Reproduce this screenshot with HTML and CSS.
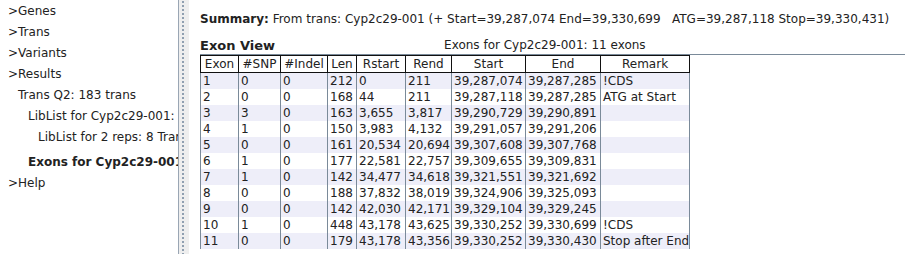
FILE: index.html
```html
<!DOCTYPE html>
<html lang="en">
<head>
    <meta charset="UTF-8">
    <title>Exon View</title>
    <link rel="stylesheet" href="styles.css">
</head>
<body>
    <div class="frame">
        <!-- Left navigation tree -->
        <div class="tree">
            <div class="node">&gt;Genes</div>
            <div class="node">&gt;Trans</div>
            <div class="node">&gt;Variants</div>
            <div class="node">&gt;Results</div>
            <div class="node lvl1">Trans Q2: 183 trans</div>
            <div class="node lvl2">LibList for Cyp2c29-001:</div>
            <div class="node lvl3">LibList for 2 reps: 8 Tran</div>
            <div class="node lvl2 current">Exons for Cyp2c29-001:</div>
            <div class="node">&gt;Help</div>
        </div>

        <div class="divider"></div>

        <!-- Result panel -->
        <div class="panel">
            <div class="summary"><b>Summary:</b> From trans: Cyp2c29-001 (+ Start=39,287,074 End=39,330,699 &nbsp; ATG=39,287,118 Stop=39,330,431)</div>

            <div class="view-head">
                <b>Exon View</b>
                <span class="view-title">Exons for Cyp2c29-001: 11 exons</span>
            </div>

            <div class="scroll">
                <table class="exons">
                    <thead>
                        <tr>
                            <th class="c-exon">Exon</th>
                            <th class="c-snp">#SNP</th>
                            <th class="c-indel">#Indel</th>
                            <th class="c-len">Len</th>
                            <th class="c-rstart">Rstart</th>
                            <th class="c-rend">Rend</th>
                            <th class="c-start">Start</th>
                            <th class="c-end">End</th>
                            <th class="c-remark">Remark</th>
                        </tr>
                    </thead>
                    <tbody>
                        <tr><td>1</td><td>0</td><td>0</td><td>212</td><td>0</td><td>211</td><td>39,287,074</td><td>39,287,285</td><td>!CDS</td></tr>
                        <tr><td>2</td><td>0</td><td>0</td><td>168</td><td>44</td><td>211</td><td>39,287,118</td><td>39,287,285</td><td>ATG at Start</td></tr>
                        <tr><td>3</td><td>3</td><td>0</td><td>163</td><td>3,655</td><td>3,817</td><td>39,290,729</td><td>39,290,891</td><td></td></tr>
                        <tr><td>4</td><td>1</td><td>0</td><td>150</td><td>3,983</td><td>4,132</td><td>39,291,057</td><td>39,291,206</td><td></td></tr>
                        <tr><td>5</td><td>0</td><td>0</td><td>161</td><td>20,534</td><td>20,694</td><td>39,307,608</td><td>39,307,768</td><td></td></tr>
                        <tr><td>6</td><td>1</td><td>0</td><td>177</td><td>22,581</td><td>22,757</td><td>39,309,655</td><td>39,309,831</td><td></td></tr>
                        <tr><td>7</td><td>1</td><td>0</td><td>142</td><td>34,477</td><td>34,618</td><td>39,321,551</td><td>39,321,692</td><td></td></tr>
                        <tr><td>8</td><td>0</td><td>0</td><td>188</td><td>37,832</td><td>38,019</td><td>39,324,906</td><td>39,325,093</td><td></td></tr>
                        <tr><td>9</td><td>0</td><td>0</td><td>142</td><td>42,030</td><td>42,171</td><td>39,329,104</td><td>39,329,245</td><td></td></tr>
                        <tr><td>10</td><td>1</td><td>0</td><td>448</td><td>43,178</td><td>43,625</td><td>39,330,252</td><td>39,330,699</td><td>!CDS</td></tr>
                        <tr><td>11</td><td>0</td><td>0</td><td>179</td><td>43,178</td><td>43,356</td><td>39,330,252</td><td>39,330,430</td><td>Stop after End</td></tr>
                    </tbody>
                </table>
            </div>
        </div>
    </div>
</body>
</html>
```
FILE: styles.css
```css
/* Swing-like result browser */
html, body { margin: 0; height: 100%; background: #fff; }
body { font-family: "DejaVu Sans", Verdana, sans-serif; font-size: 12px; color: #222; overflow: hidden; }

.frame { display: flex; height: 254px; overflow: hidden; }

.tree { width: 178px; flex: none; padding-top: 1px; overflow: hidden; white-space: nowrap; }
.node { height: 21px; line-height: 21px; padding-left: 8px; overflow: hidden; }
.node.lvl1 { padding-left: 18px; }
.node.lvl2 { padding-left: 28px; }
.node.lvl3 { padding-left: 38px; }
.node.current { font-weight: bold; height: 25px; line-height: 29px; }

.divider {
    width: 10px; flex: none;
    border-left: 1px solid #9aa6b4;
    background-color: #eeeeee;
    background-image: radial-gradient(circle, #8f9fb0 0.8px, transparent 1px);
    background-size: 4px 4px;
    background-position: 2px 0;
    background-repeat: repeat-y;
}

.panel { flex: 1; padding-left: 11px; min-width: 0; }
.summary { margin-top: 11px; height: 16px; line-height: 16px; white-space: nowrap; }

.view-head { display: flex; margin-top: 10px; height: 17px; line-height: 17px; }
.view-head b { font-size: 13px; }
.view-title { margin-left: 169px; }

.scroll { border-top: 1px solid #7a8a99; height: 199px; overflow: hidden; }

.exons { border-collapse: collapse; table-layout: fixed; border-left: 1px solid #7a8a99; }
.exons th {
    height: 16px; padding: 0; border: 1px solid #111;
    font-weight: normal; text-align: center; background: #fff;
}
.exons td {
    height: 16px; padding: 0 0 0 2px; line-height: 16px;
    border-left: 1px solid #7a8a99; border-right: 1px solid #7a8a99;
    white-space: nowrap; overflow: hidden;
}
.exons tbody tr:nth-child(odd) { background: #eeeef9; }

.c-exon { width: 37px; }
.c-snp { width: 41px; }
.c-indel { width: 46px; }
.c-len { width: 28px; }
.c-rstart { width: 48px; }
.c-rend { width: 45px; }
.c-start { width: 73px; }
.c-end { width: 74px; }
.c-remark { width: 86px; }
```
